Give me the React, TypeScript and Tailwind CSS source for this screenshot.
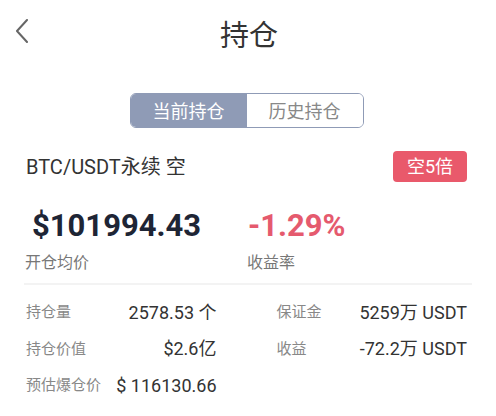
import React from "react";

const rows = [
    { l1: "持仓量", v1: "2578.53 个", l2: "保证金", v2: "5259万 USDT" },
    { l1: "持仓价值", v1: "$2.6亿", l2: "收益", v2: "-72.2万 USDT" },
    { l1: "预估爆仓价", v1: "$ 116130.66", l2: "", v2: "" },
];

export default function App() {
    const [tab, setTab] = React.useState(0);

    return (
        <div className="w-[496px] h-[416px] overflow-hidden bg-white font-['Roboto','Noto_Sans_CJK_SC',sans-serif] text-[#333]">
            {/* Header */}
            <div className="grid grid-cols-[1fr_auto_1fr] items-center h-[70px]">
                <div className="pl-[15px] pb-[8px]">
                    <svg width="14" height="24" viewBox="0 0 14 24" fill="none">
                        <polyline points="12,1 2,12 12,23" stroke="#666" strokeWidth="2" strokeLinejoin="round" strokeLinecap="round" />
                    </svg>
                </div>
                <h1 className="text-[29px] leading-none text-[#333] pl-[2px] pt-[2px]">持仓</h1>
                <div />
            </div>

            {/* Tabs */}
            <div className="flex justify-center mt-[23px] pr-[3px]">
                <div className="flex w-[234px] h-[35px] rounded-[6px] border border-[#8f9bb6] overflow-hidden">
                    {["当前持仓", "历史持仓"].map((t, i) => (
                        <button
                            key={t}
                            type="button"
                            onClick={() => setTab(i)}
                            className={`flex-1 flex items-center justify-center pt-[2px] text-[18px] ${tab === i ? "bg-[#8f9bb6] text-white" : "bg-white text-[#888]"}`}
                        >
                            {t}
                        </button>
                    ))}
                </div>
            </div>

            {/* Position title */}
            <div className="flex items-center justify-between mt-[23px] pl-[26px] pr-[29px]">
                <span className="text-[20px]">BTC/USDT永续 空</span>
                <span className="flex items-center justify-center w-[74px] h-[31px] rounded-[4px] bg-[#e9596b] text-white text-[18px]">
                    空5倍
                </span>
            </div>

            {/* Summary */}
            <div className="grid grid-cols-[222px_1fr] mt-[26px] pl-[25px]">
                <div>
                    <div className="pl-[7px] text-[31px] leading-[36px] font-bold text-[#1e2535]">$101994.43</div>
                    <div className="mt-[8px] text-[16px] leading-[22px] text-[#777]">开仓均价</div>
                </div>
                <div>
                    <div className="pl-[1px] text-[31px] leading-[36px] font-bold text-[#e55a6e]">-1.29%</div>
                    <div className="mt-[8px] text-[16px] leading-[22px] text-[#777]">收益率</div>
                </div>
            </div>

            <hr className="mx-[24px] mt-[9px] border-0 h-[2px] bg-[#f3f3f3]" />

            {/* Details */}
            <div className="mt-[9px] pl-[26px] pr-[29px]">
                {rows.map((r) => (
                    <div key={r.l1} className="grid grid-cols-2 gap-[60px] h-[36.5px] items-center">
                        <div className="flex items-center justify-between">
                            <span className="text-[15px] text-[#888]">{r.l1}</span>
                            <span className="text-[18px] text-[#333]">{r.v1}</span>
                        </div>
                        <div className="flex items-center justify-between">
                            <span className="text-[15px] text-[#888]">{r.l2}</span>
                            <span className="text-[18px] text-[#333]">{r.v2}</span>
                        </div>
                    </div>
                ))}
            </div>
        </div>
    );
}
